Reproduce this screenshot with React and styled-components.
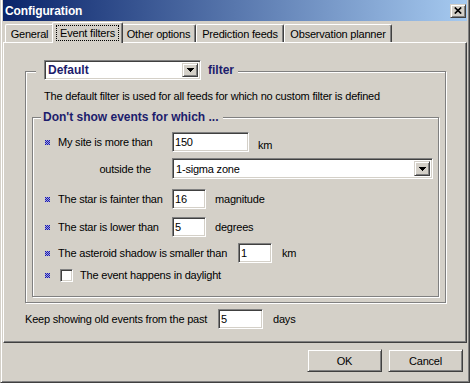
import React from 'react';
import styled, { createGlobalStyle } from 'styled-components';

const GlobalStyle = createGlobalStyle`
  html, body { margin: 0; padding: 0; background: #d4d0c8; }
  body {
    font-family: "Liberation Sans", Arial, sans-serif;
    font-size: 11px;
    letter-spacing: -0.2px;
    color: #000;
  }
  * { box-sizing: border-box; }
`;

const raised = `
  background: #d4d0c8;
  border: 1px solid;
  border-color: #d4d0c8 #404040 #404040 #d4d0c8;
  box-shadow: inset 1px 1px #fff, inset -1px -1px #808080;
`;

const sunken = `
  background: #fff;
  border: 1px solid;
  border-color: #808080 #fff #fff #808080;
  box-shadow: inset 1px 1px #404040, inset -1px -1px #d4d0c8;
`;

const Window = styled.div`
  width: 470px;
  height: 383px;
  background: #d4d0c8;
  border: 1px solid;
  border-top: 0;
  border-color: #d4d0c8 #404040 #404040 #d4d0c8;
  box-shadow: inset 1px 0 #fff, inset -1px -1px #808080;
  padding: 0 2px 2px 2px;
  display: flex;
  flex-direction: column;
`;

const TitleBar = styled.div`
  height: 21px;
  flex: none;
  display: flex;
  align-items: center;
  justify-content: space-between;
  padding: 0 1px 0 2px;
  background: linear-gradient(to right, #0a246a, #a6caf0);
`;

const TitleText = styled.span`
  color: #fff;
  font-weight: bold;
  font-size: 12px;
  letter-spacing: -0.1px;
`;

const CloseButton = styled.div`
  ${raised}
  width: 16px;
  height: 14px;
  display: flex;
  align-items: center;
  justify-content: center;
`;

const TabStrip = styled.div`
  height: 20px;
  margin-top: 1px;
  flex: none;
  display: flex;
  align-items: flex-end;
  padding-left: 2px;
  position: relative;
  z-index: 1;
`;

const Tab = styled.div`
  position: relative;
  z-index: ${p => (p.$active ? 2 : 1)};
  width: ${p => (p.$active ? p.$width + 4 : p.$width)}px;
  height: ${p => (p.$active ? 21 : 18)}px;
  margin: 0 ${p => (p.$active ? -2 : 0)}px ${p => (p.$active ? -1 : 0)}px;
  background: #d4d0c8;
  border-top: 1px solid #fff;
  border-left: 1px solid #fff;
  border-right: 1px solid #404040;
  border-radius: 2px 2px 0 0;
  box-shadow: inset -1px 0 #808080;
  display: flex;
  align-items: center;
  justify-content: center;
  padding-bottom: ${p => (p.$active ? 1 : 0)}px;
  white-space: nowrap;
`;

const FocusLabel = styled.span`
  display: inline-block;
  line-height: 12px;
  padding: 1px 3px;
  border: 1px dotted #000;
`;

const Panel = styled.div`
  height: 301px;
  flex: none;
  border: 1px solid;
  border-color: #fff #404040 #404040 #fff;
  box-shadow: inset -1px -1px #808080;
  padding: 28px 0 0 21px;
  display: flex;
  flex-direction: column;
`;

const GroupBox = styled.div`
  position: relative;
  width: ${p => p.$width}px;
  height: ${p => p.$height}px;
  margin: ${p => p.$margin || 0};
  border: 1px solid #808080;
  box-shadow: 1px 1px 0 #fff, inset 1px 1px 0 #fff;
  padding: ${p => p.$padding || 0};
  display: flex;
  flex-direction: column;
`;

/* caption sits over the etched top line of its group box */
const Caption = styled.div`
  position: absolute;
  top: ${p => p.$top}px;
  left: ${p => p.$left}px;
  background: #d4d0c8;
  padding: ${p => p.$pad};
  display: flex;
  align-items: center;
  gap: 7px;
  color: #1c1c6c;
  font-weight: bold;
  font-size: 12px;
  letter-spacing: 0;
  line-height: 14px;
  white-space: nowrap;
`;

const Description = styled.div`
  height: 13px;
  line-height: 13px;
  margin-left: 12px;
  white-space: nowrap;
`;

const Row = styled.div`
  display: flex;
  align-items: center;
  height: ${p => p.$height || 20}px;
  margin-top: ${p => p.$gap || 0}px;
  flex: none;
`;

const Bullet = styled.svg`
  width: 5px;
  height: 5px;
  flex: none;
  margin-right: ${p => p.$space || 8}px;
  shape-rendering: crispEdges;
`;

const Label = styled.span`
  width: ${p => p.$width}px;
  flex: none;
  text-align: ${p => p.$align || 'left'};
  padding-right: ${p => p.$pr || 0}px;
  white-space: nowrap;
`;

const Unit = styled.span`
  margin-left: ${p => p.$space || 9}px;
  margin-top: ${p => p.$drop || 0}px;
  white-space: nowrap;
`;

const Field = styled.input`
  ${sunken}
  width: ${p => p.$width}px;
  height: 20px;
  padding: 0 2px;
  font: inherit;
  letter-spacing: inherit;
  color: #000;
  outline: none;
`;

const Combo = styled.div`
  ${sunken}
  width: ${p => p.$width}px;
  height: ${p => p.$height}px;
  padding: 2px 2px 2px 3px;
  display: flex;
  align-items: center;
  justify-content: space-between;
  color: ${p => (p.$bold ? '#1c1c6c' : '#000')};
  font-weight: ${p => (p.$bold ? 'bold' : 'normal')};
  font-size: ${p => (p.$bold ? 12 : 11)}px;
  letter-spacing: ${p => (p.$bold ? 0 : -0.2)}px;
`;

const ArrowButton = styled.div`
  ${raised}
  width: 16px;
  height: 100%;
  display: flex;
  align-items: center;
  justify-content: center;
`;

const CheckBox = styled.div`
  ${sunken}
  width: 13px;
  height: 13px;
  flex: none;
  margin-right: 7px;
`;

const Footer = styled.div`
  display: flex;
  justify-content: flex-end;
  gap: 6px;
  margin-top: 6px;
  padding-right: 4px;
`;

const Button = styled.div`
  ${raised}
  width: 75px;
  height: 23px;
  display: flex;
  align-items: center;
  justify-content: center;
`;

// little blue checkered square in front of each condition
function Dot({ space }) {
  const cells = [];
  for (let y = 0; y < 5; y++) {
    for (let x = 0; x < 5; x++) {
      cells.push(
        <rect key={`${x}-${y}`} x={x} y={y} width="1" height="1"
          fill={(x + y) % 2 === 0 ? '#1c1ca8' : '#9c9ce4'} />
      );
    }
  }
  return (
    <Bullet viewBox="0 0 5 5" $space={space}>
      {cells}
    </Bullet>
  );
}

function Arrow() {
  return (
    <svg width="7" height="4" viewBox="0 0 7 4" shapeRendering="crispEdges">
      <rect x="0" y="0" width="7" height="1" fill="#000" />
      <rect x="1" y="1" width="5" height="1" fill="#000" />
      <rect x="2" y="2" width="3" height="1" fill="#000" />
      <rect x="3" y="3" width="1" height="1" fill="#000" />
    </svg>
  );
}

function Select({ width, height, bold, children }) {
  return (
    <Combo $width={width} $height={height} $bold={bold}>
      <span>{children}</span>
      <ArrowButton><Arrow /></ArrowButton>
    </Combo>
  );
}

const tabs = [
  { label: 'General', width: 49 },
  { label: 'Event filters', width: 67, active: true },
  { label: 'Other options', width: 75 },
  { label: 'Prediction feeds', width: 88 },
  { label: 'Observation planner', width: 108 },
];

export default function App() {
  return (
    <>
      <GlobalStyle />
      <Window>
        <TitleBar>
          <TitleText>Configuration</TitleText>
          <CloseButton>
            <svg width="8" height="7" viewBox="0 0 8 7">
              <path d="M0.8 0.5L7.2 6.5M7.2 0.5L0.8 6.5" stroke="#000" strokeWidth="1.7" />
            </svg>
          </CloseButton>
        </TitleBar>

        <TabStrip>
          {tabs.map(tab => (
            <Tab key={tab.label} $width={tab.width} $active={tab.active}>
              {tab.active ? <FocusLabel>{tab.label}</FocusLabel> : tab.label}
            </Tab>
          ))}
        </TabStrip>

        <Panel>
          <GroupBox $width={421} $height={232} $padding="18px 6px 0">
            <Caption $top={-12} $left={10} $pad="0 4px 0 8px">
              <Select width={157} height={20} bold>Default</Select>
              <span>filter</span>
            </Caption>
            <Description>
              The default filter is used for all feeds for which no custom filter is defined
            </Description>

            <GroupBox $width={407} $height={180} $margin="14px 0 0" $padding="14px 0 0 12px">
              <Caption $top={-8} $left={8} $pad="0 4px 0 2px">
                Don't show events for which ...
              </Caption>

              <Row>
                <Dot />
                <Label $width={114}>My site is more than</Label>
                <Field $width={77} defaultValue="150" />
                <Unit $drop={6}>km</Unit>
              </Row>

              <Row $gap={6} $height={21}>
                <Label $width={127} $align="right" $pr={21}>outside the</Label>
                <Select width={261} height={21}>1-sigma zone</Select>
              </Row>

              <Row $gap={10}>
                <Dot />
                <Label $width={114}>The star is fainter than</Label>
                <Field $width={34} defaultValue="16" />
                <Unit>magnitude</Unit>
              </Row>

              <Row $gap={8}>
                <Dot />
                <Label $width={114}>The star is lower than</Label>
                <Field $width={34} defaultValue="5" />
                <Unit>degrees</Unit>
              </Row>

              <Row $gap={6}>
                <Dot />
                <Label $width={180}>The asteroid shadow is smaller than</Label>
                <Field $width={34} defaultValue="1" />
                <Unit $space={10}>km</Unit>
              </Row>

              <Row $gap={2}>
                <Dot space={10} />
                <CheckBox />
                <span>The event happens in daylight</span>
              </Row>
            </GroupBox>
          </GroupBox>

          <Row $gap={6}>
            <Label $width={193}>Keep showing old events from the past</Label>
            <Field $width={45} defaultValue="5" />
            <Unit $space={10}>days</Unit>
          </Row>
        </Panel>

        <Footer>
          <Button>OK</Button>
          <Button>Cancel</Button>
        </Footer>
      </Window>
    </>
  );
}
